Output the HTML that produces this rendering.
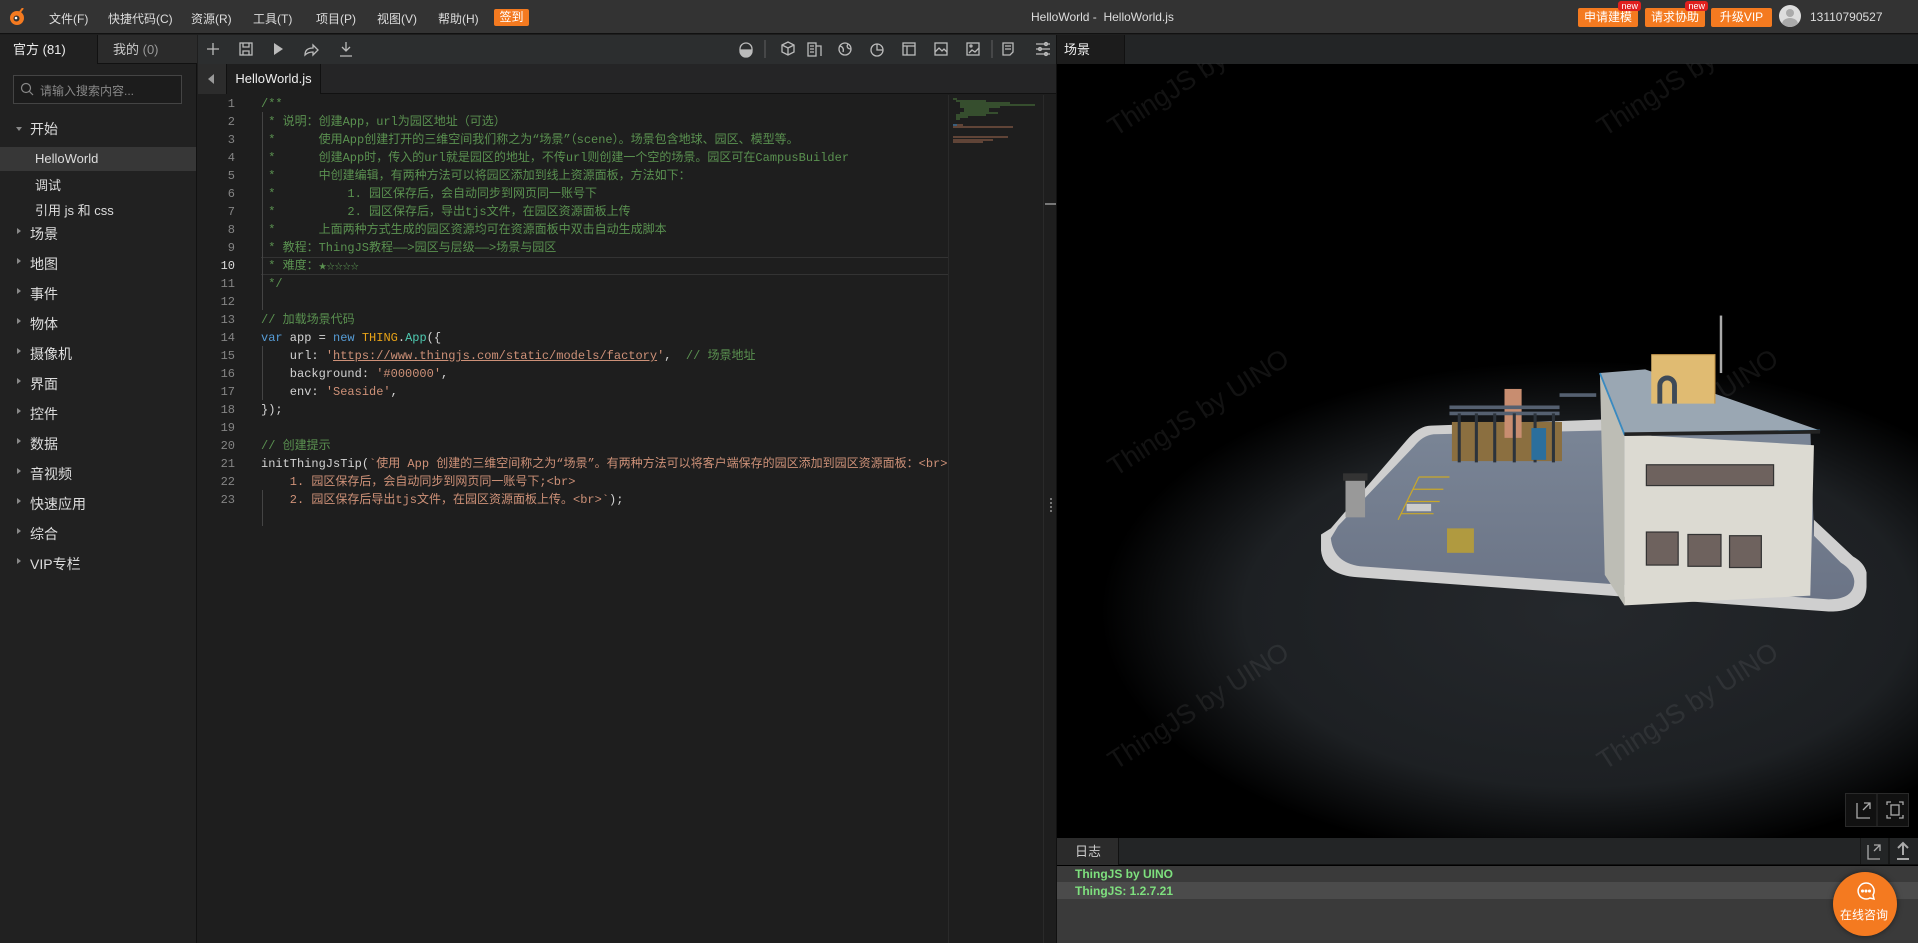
<!DOCTYPE html>
<html><head><meta charset="utf-8"><style>
*{margin:0;padding:0;box-sizing:border-box}
body{width:1918px;height:943px;overflow:hidden;background:#1e1e1e;font-family:"Liberation Sans","Noto Sans CJK SC",sans-serif;color:#ccc;position:relative}
.abs{position:absolute}
#top{left:0;top:0;width:1918px;height:34px;background:#333;border-bottom:1px solid #111}
.menu{position:absolute;top:10px;font-size:12px;color:#ddd}
.obtn{position:absolute;top:8px;height:19px;background:#f47a20;color:#fff;font-size:12px;line-height:19px;text-align:center;border-radius:2px}
.new{position:absolute;top:-7px;right:-3px;background:#e0201e;color:#fff;font-size:9px;line-height:10px;padding:0 3px;border-radius:3px}
#side{left:0;top:35px;width:197px;height:908px;background:#212121;border-right:1px solid #111}
.it{position:absolute;left:30px;font-size:14px;color:#ddd}
.tri{position:absolute;left:17px;width:0;height:0;border-left:4px solid #888;border-top:3px solid transparent;border-bottom:3px solid transparent}
#code{left:198px;top:95px;width:750px;height:848px;background:#1e1e1e;overflow:hidden;font-family:"Liberation Mono","Noto Sans CJK SC",monospace;font-size:12px}
.ln{position:absolute;left:0;width:37px;text-align:right;color:#858585;line-height:18px}
.cl{position:absolute;left:63px;white-space:pre;line-height:18px;color:#d4d4d4}
.c{color:#5a9150}.k{color:#569cd6}.s{color:#ce9178}.t{color:#e8a317}.a{color:#4ec9b0}
</style></head><body>
<div id="top" class="abs">
 <svg class="abs" style="left:9px;top:8px" width="16" height="18" viewBox="0 0 16 18"><circle cx="8" cy="10" r="7" fill="#f47a20"/><circle cx="7.5" cy="10.5" r="3" fill="#333"/><circle cx="7" cy="10" r="1.3" fill="#fff"/><path d="M11 4 L14 0" stroke="#f47a20" stroke-width="2"/></svg>
 <span class="menu" style="left:49px">文件(F)</span>
 <span class="menu" style="left:108px">快捷代码(C)</span>
 <span class="menu" style="left:191px">资源(R)</span>
 <span class="menu" style="left:253px">工具(T)</span>
 <span class="menu" style="left:316px">项目(P)</span>
 <span class="menu" style="left:377px">视图(V)</span>
 <span class="menu" style="left:438px">帮助(H)</span>
 <div class="obtn" style="left:494px;width:35px;top:9px;height:17px;line-height:17px">签到</div>
 <span class="menu" style="left:1031px;color:#ddd">HelloWorld -&nbsp; HelloWorld.js</span>
 <div class="obtn" style="left:1578px;width:60px">申请建模<span class="new">new</span></div>
 <div class="obtn" style="left:1645px;width:60px">请求协助<span class="new">new</span></div>
 <div class="obtn" style="left:1711px;width:61px">升级VIP</div>
 <div class="abs" style="left:1779px;top:5px;width:22px;height:22px;border-radius:50%;background:#ddd;overflow:hidden"><div class="abs" style="left:7px;top:4px;width:8px;height:8px;border-radius:50%;background:#aaa"></div><div class="abs" style="left:3px;top:13px;width:16px;height:12px;border-radius:50%;background:#aaa"></div></div>
 <span class="menu" style="left:1810px">13110790527</span>
</div>

<div id="side" class="abs">
 <div class="abs" style="left:0;top:0;width:97px;height:29px;background:#212121;color:#eee;font-size:13px;line-height:29px;padding-left:13px">官方 (81)</div>
 <div class="abs" style="left:97px;top:0;width:100px;height:29px;background:#2b2b2b;border-left:1px solid #111;border-bottom:1px solid #111;color:#ccc;font-size:13px;line-height:29px;padding-left:15px">我的 <span style="color:#999">(0)</span></div>
 <div class="abs" style="left:13px;top:40px;width:169px;height:29px;border:1px solid #444;background:#1c1c1c"></div>
 <svg class="abs" style="left:20px;top:47px" width="14" height="14"><circle cx="6" cy="6" r="4.5" stroke="#888" fill="none" stroke-width="1.2"/><path d="M9.5 9.5 L13 13" stroke="#888" stroke-width="1.2"/></svg>
 <span class="abs" style="left:40px;top:47px;font-size:12px;color:#888">请输入搜索内容...</span>
 <div class="abs" style="left:16px;top:92px;border-top:4px solid #888;border-left:3px solid transparent;border-right:3px solid transparent"></div>
 <span class="it" style="left:30px;top:84px">开始</span>
 <div class="abs" style="left:0;top:112px;width:196px;height:24px;background:#373737"></div>
 <span class="it" style="left:35px;top:116px;font-size:13px">HelloWorld</span>
 <span class="it" style="left:35px;top:140px;font-size:13px">调试</span>
 <span class="it" style="left:35px;top:165px;font-size:13px">引用 js 和 css</span>
 <div class="tri" style="top:193px"></div><span class="it" style="top:189px">场景</span>
 <div class="tri" style="top:223px"></div><span class="it" style="top:219px">地图</span>
 <div class="tri" style="top:253px"></div><span class="it" style="top:249px">事件</span>
 <div class="tri" style="top:283px"></div><span class="it" style="top:279px">物体</span>
 <div class="tri" style="top:313px"></div><span class="it" style="top:309px">摄像机</span>
 <div class="tri" style="top:343px"></div><span class="it" style="top:339px">界面</span>
 <div class="tri" style="top:373px"></div><span class="it" style="top:369px">控件</span>
 <div class="tri" style="top:403px"></div><span class="it" style="top:399px">数据</span>
 <div class="tri" style="top:433px"></div><span class="it" style="top:429px">音视频</span>
 <div class="tri" style="top:463px"></div><span class="it" style="top:459px">快速应用</span>
 <div class="tri" style="top:493px"></div><span class="it" style="top:489px">综合</span>
 <div class="tri" style="top:523px"></div><span class="it" style="top:519px">VIP专栏</span>
</div>

<div class="abs" style="left:198px;top:35px;width:858px;height:29px;background:#2c2e2f"></div>
<svg class="abs" style="left:198px;top:35px" width="858" height="29" fill="none" stroke="#bbb" stroke-width="1.3">
 <path d="M15 8v12M9 14h12"/>
 <rect x="42" y="8" width="12" height="12"/><path d="M45 8v4h6V8M45 20v-4h6v4"/>
 <path d="M76 8l9 6-9 6z" fill="#bbb" stroke="none"/>
 <path d="M107 20c0-5 3-7 8-7v-3l5 5-5 5v-3c-4 0-6 1-8 3z"/>
 <path d="M148 7v9M144 12l4 4 4-4M142 21h12"/>
 <circle cx="548" cy="14" r="6"/><path d="M542 15h12v1a6 6 0 0 1-12 0z" fill="#bbb"/>
 <path d="M567 5v18" stroke="#555"/>
 <path d="M584 10l6-3 6 3v7l-6 3-6-3zM584 10l6 3 6-3M590 13v7"/>
 <rect x="610" y="8" width="8" height="13"/><path d="M618 11h5v10M612 11h4M612 14h4M612 17h4"/>
 <circle cx="647" cy="14" r="6"/><path d="M642 11c3 1 4 3 3 6M650 9c-2 3 0 5 3 5"/>
 <circle cx="679" cy="15" r="6"/><path d="M679 9v6h6"/>
 <rect x="705" y="8" width="12" height="12"/><path d="M705 11h12M709 11v9"/>
 <rect x="737" y="8" width="12" height="12"/><path d="M737 17l4-4 3 3 2-2 3 3"/>
 <rect x="769" y="8" width="12" height="12"/><path d="M771 18l3-3 3 2 4-4"/><circle cx="773" cy="11" r="1"/>
 <path d="M794 5v18" stroke="#555"/>
 <path d="M805 8h10v9l-3 3h-7zM807 11h6M807 14h6"/>
 <path d="M838 9h14M838 14h14M838 19h14"/><circle cx="848" cy="9" r="1.5"/><circle cx="842" cy="14" r="1.5"/><circle cx="848" cy="19" r="1.5"/>
</svg>
<div class="abs" style="left:198px;top:64px;width:858px;height:30px;background:#252526;border-bottom:1px solid #111"></div>
<div class="abs" style="left:198px;top:64px;width:29px;height:30px;background:#2c2c2c;border-right:1px solid #111"></div>
<div class="abs" style="left:208px;top:74px;border-right:6px solid #999;border-top:5px solid transparent;border-bottom:5px solid transparent"></div>
<div class="abs" style="left:227px;top:64px;width:94px;height:30px;background:#1e1e1e;border-right:1px solid #111;color:#eee;font-size:13px;line-height:30px;text-align:center">HelloWorld.js</div>

<div id="code" class="abs">
 <div class="abs" style="left:63px;top:162px;width:687px;height:18px;border-top:1px solid #333;border-bottom:1px solid #333"></div>
 <div class="abs" style="left:64px;top:17px;width:1px;height:198px;background:#444"></div>
 <div class="abs" style="left:64px;top:251px;width:1px;height:54px;background:#444"></div>
 <div class="abs" style="left:64px;top:395px;width:1px;height:36px;background:#444"></div>
 <div class="ln" style="top:0">1</div><div class="cl c" style="top:0">/**</div>
 <div class="ln" style="top:18px">2</div><div class="cl c" style="top:18px"> * 说明：创建App，url为园区地址（可选）</div>
 <div class="ln" style="top:36px">3</div><div class="cl c" style="top:36px"> *      使用App创建打开的三维空间我们称之为“场景”（scene）。场景包含地球、园区、模型等。</div>
 <div class="ln" style="top:54px">4</div><div class="cl c" style="top:54px"> *      创建App时，传入的url就是园区的地址，不传url则创建一个空的场景。园区可在CampusBuilder</div>
 <div class="ln" style="top:72px">5</div><div class="cl c" style="top:72px"> *      中创建编辑，有两种方法可以将园区添加到线上资源面板，方法如下：</div>
 <div class="ln" style="top:90px">6</div><div class="cl c" style="top:90px"> *          1. 园区保存后，会自动同步到网页同一账号下</div>
 <div class="ln" style="top:108px">7</div><div class="cl c" style="top:108px"> *          2. 园区保存后，导出tjs文件，在园区资源面板上传</div>
 <div class="ln" style="top:126px">8</div><div class="cl c" style="top:126px"> *      上面两种方式生成的园区资源均可在资源面板中双击自动生成脚本</div>
 <div class="ln" style="top:144px">9</div><div class="cl c" style="top:144px"> * 教程：ThingJS教程——>园区与层级——>场景与园区</div>
 <div class="ln" style="top:162px;color:#ddd">10</div><div class="cl c" style="top:162px"> * 难度：<span style="font-size:8px">★☆☆☆☆</span></div>
 <div class="ln" style="top:180px">11</div><div class="cl c" style="top:180px"> */</div>
 <div class="ln" style="top:198px">12</div>
 <div class="ln" style="top:216px">13</div><div class="cl c" style="top:216px">// 加载场景代码</div>
 <div class="ln" style="top:234px">14</div><div class="cl" style="top:234px"><span class="k">var</span> app = <span class="k">new</span> <span class="t">THING</span>.<span class="a">App</span>({</div>
 <div class="ln" style="top:252px">15</div><div class="cl" style="top:252px">    url: <span class="s">'<u>https://www.thingjs.com/static/models/factory</u>'</span>,  <span class="c">// 场景地址</span></div>
 <div class="ln" style="top:270px">16</div><div class="cl" style="top:270px">    background: <span class="s">'#000000'</span>,</div>
 <div class="ln" style="top:288px">17</div><div class="cl" style="top:288px">    env: <span class="s">'Seaside'</span>,</div>
 <div class="ln" style="top:306px">18</div><div class="cl" style="top:306px">});</div>
 <div class="ln" style="top:324px">19</div>
 <div class="ln" style="top:342px">20</div><div class="cl c" style="top:342px">// 创建提示</div>
 <div class="ln" style="top:360px">21</div><div class="cl" style="top:360px">initThingJsTip(<span class="s">`使用 App 创建的三维空间称之为“场景”。有两种方法可以将客户端保存的园区添加到园区资源面板：&lt;br&gt;</span></div>
 <div class="ln" style="top:378px">22</div><div class="cl s" style="top:378px">    1. 园区保存后，会自动同步到网页同一账号下;&lt;br&gt;</div>
 <div class="ln" style="top:396px">23</div><div class="cl" style="top:396px"><span class="s">    2. 园区保存后导出tjs文件，在园区资源面板上传。&lt;br&gt;`</span>);</div>
</div>
<div class="abs" style="left:948px;top:95px;width:95px;height:848px;background:#1e1e1e;border-left:1px solid #2a2a2a"></div>
<svg class="abs" style="left:950px;top:97px" width="92" height="50"><g stroke="#4e7d3e" stroke-width="1"><path d="M3 2h4M6 4h30M10 6h50M10 8h75M10 10h40M14 12h25M14 14h25M10 16h38M6 18h30M6 20h12M6 22h4"/></g><path d="M3 28h10M3 30h60M3 40h55" stroke="#a36a50"/><path d="M3 28h4" stroke="#569cd6"/><path d="M3 43h40M3 45h30" stroke="#a36a50"/></svg>
<div class="abs" style="left:1043px;top:95px;width:13px;height:848px;background:#1e1e1e;border-left:1px solid #2a2a2a"></div>
<div class="abs" style="left:1045px;top:203px;width:11px;height:2px;background:#777"></div>
<div class="abs" style="left:1050px;top:498px;width:2px;height:14px;border-left:2px dotted #777"></div>

<div class="abs" style="left:1056px;top:35px;width:862px;height:908px;background:#000;border-left:1px solid #111"></div>
<div class="abs" style="left:1057px;top:35px;width:861px;height:29px;background:#232526"></div>
<div class="abs" style="left:1057px;top:35px;width:68px;height:29px;background:#1c1c1c;border-right:1px solid #111;color:#eee;font-size:13px;line-height:29px;padding-left:7px">场景</div>
<svg class="abs" style="left:0;top:0" width="1918" height="943" viewBox="0 0 1568 771">
 <defs>
  <radialGradient id="g" cx="0.5" cy="0.5" r="0.5"><stop offset="0" stop-color="#25282c"/><stop offset="0.7" stop-color="#1d2023"/><stop offset="1" stop-color="#000"/></radialGradient>
  <clipPath id="vp"><rect x="865" y="52" width="703" height="633"/></clipPath>
  <linearGradient id="fl" x1="0" y1="0" x2="0" y2="1"><stop offset="0" stop-color="#7a8596"/><stop offset="1" stop-color="#6b7486"/></linearGradient>
 </defs>
 <g clip-path="url(#vp)">
  <ellipse cx="1290" cy="500" rx="390" ry="205" fill="url(#g)"/>
  <g fill="#ffffff" fill-opacity="0.07" font-family="Liberation Sans" font-size="22">
   <text transform="translate(912,112) rotate(-33)">ThingJS by</text>
   <text transform="translate(1312,112) rotate(-33)">ThingJS by</text>
   <text transform="translate(912,390) rotate(-33)">ThingJS by UINO</text>
   <text transform="translate(1312,390) rotate(-33)">ThingJS by UINO</text>
   <text transform="translate(912,630) rotate(-33)">ThingJS by UINO</text>
   <text transform="translate(1312,630) rotate(-33)">ThingJS by UINO</text>
  </g>
  <path d="M1080 437 L1080 450 Q1082 470 1110 472 L1495 500 Q1525 500 1526 480 L1526 468 Q1524 460 1515 455 L1483 425 L1483 440 Q1478 440 1400 340 L1310 343 L1170 348 Q1160 348 1150 360 L1088 432 Z" fill="#cfcfcf"/>
  <path d="M1088 440 Q1090 460 1112 463 L1495 490 Q1516 490 1516 475 Q1515 466 1505 460 L1483 438 L1480 350 L1310 352 L1172 355 Q1163 356 1156 365 L1094 430 Z" fill="url(#fl)"/>
  <path d="M1308 305 L1328 355 L1328 495 L1312 470 Z" fill="#bdbdb5"/>
  <path d="M1328 355 L1483 364 L1480 487 L1328 495 Z" fill="#dcdad2"/>
  <path d="M1308 305 L1345 302 L1488 352 L1328 355 Z" fill="#9aa7b3"/>
  <path d="M1308 305 L1328 355 L1488 352" fill="none" stroke="#3a8ac0" stroke-width="1.5"/>
  <path d="M1328 355 L1488 353" stroke="#222" stroke-width="3"/>
  <rect x="1346" y="380" width="104" height="17" fill="#6e625e" stroke="#333"/>
  <rect x="1346" y="435" width="26" height="27" fill="#6e625e" stroke="#333"/>
  <rect x="1380" y="437" width="27" height="26" fill="#6e625e" stroke="#333"/>
  <rect x="1414" y="438" width="26" height="26" fill="#6e625e" stroke="#333"/>
  <rect x="1350" y="290" width="52" height="40" fill="#e0bb72"/>
  <path d="M1350 290 L1402 290 L1402 330" fill="none" stroke="#c99b50"/>
  <path d="M1357 330 v-15 a6 6 0 0 1 12 0 v15" fill="none" stroke="#3e4a58" stroke-width="4"/>
  <path d="M1407 258 L1407 305" stroke="#aaa" stroke-width="2"/>
  <rect x="1187" y="345" width="90" height="32" fill="#8b6f40"/>
  <rect x="1230" y="318" width="14" height="40" fill="#c88d70"/>
  <path d="M1185 333 H1275 M1185 338 H1275 M1275 323 H1305" stroke="#556070" stroke-width="3"/>
  <path d="M1193 338 V378 M1207 338 V378 M1222 338 V378 M1238 338 V378 M1255 338 V378 M1270 338 V378" stroke="#2c333b" stroke-width="2.5"/>
  <rect x="1252" y="350" width="12" height="26" fill="#2b6f9d"/>
  <rect x="1100" y="393" width="16" height="30" fill="#999"/>
  <rect x="1098" y="387" width="20" height="6" fill="#333"/>
  <path d="M1143 425 L1160 390 M1160 390 H1185 M1155 400 H1180 M1150 410 H1177 M1145 420 H1172" stroke="#c9a82a" stroke-width="1"/>
  <rect x="1150" y="412" width="20" height="6" fill="#ccc"/>
  <rect x="1183" y="432" width="22" height="20" fill="#b09a40"/>
 </g>
</svg>
<div class="abs" style="left:1845px;top:793px;width:64px;height:34px;background:#111;border:1px solid #2a2a2a"></div>
<svg class="abs" style="left:1845px;top:793px" width="64" height="34" fill="none" stroke="#aaa" stroke-width="1.3"><path d="M12 10v15h13M19 10h6v6M25 10l-7 7"/><path d="M32 0v34" stroke="#2a2a2a"/><path d="M42 12v-3h4M58 12v-3h-4M42 22v3h4M58 22v3h-4"/><rect x="46" y="12" width="8" height="10"/></svg>
<div class="abs" style="left:1057px;top:838px;width:861px;height:27px;background:#232526;border-bottom:1px solid #111"></div>
<div class="abs" style="left:1057px;top:838px;width:62px;height:27px;background:#2b2b2b;border-right:1px solid #111;color:#ccc;font-size:13px;line-height:27px;padding-left:18px">日志</div>
<svg class="abs" style="left:1860px;top:838px" width="58" height="27" fill="none" stroke="#aaa" stroke-width="1.3"><path d="M0 0v27M29 0v27" stroke="#111"/><path d="M8 7v14h12M14 7h6v6M20 7l-6 6"/><path d="M43 5v12M38 10l5-5 5 5M37 21h12" stroke-width="2"/></svg>
<div class="abs" style="left:1057px;top:866px;width:861px;height:77px;background:#3a3a3a"></div>
<div class="abs" style="left:1057px;top:882px;width:861px;height:17px;background:#4b4b4b"></div>
<span class="abs" style="left:1075px;top:867px;font-size:12px;color:#7ee07e;font-weight:bold">ThingJS by UINO</span>
<span class="abs" style="left:1075px;top:884px;font-size:12px;color:#7ee07e;font-weight:bold">ThingJS: 1.2.7.21</span>
<div class="abs" style="left:1833px;top:872px;width:64px;height:64px;border-radius:50%;background:#f47a20;box-shadow:0 0 6px rgba(0,0,0,.5)"></div>
<svg class="abs" style="left:1855px;top:880px" width="22" height="22" fill="none" stroke="#fff" stroke-width="1.5"><path d="M11 3a8 8 0 1 0 4 15l4 1-1-4a8 8 0 0 0-7-12z"/><circle cx="7.5" cy="11" r=".8" fill="#fff"/><circle cx="11" cy="11" r=".8" fill="#fff"/><circle cx="14.5" cy="11" r=".8" fill="#fff"/></svg>
<span class="abs" style="left:1840px;top:906px;font-size:12px;color:#fff">在线咨询</span>
</body></html>
